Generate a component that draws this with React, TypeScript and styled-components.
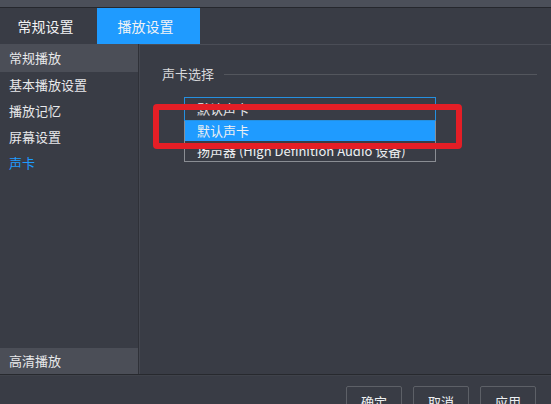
import React from "react";
import styled, { createGlobalStyle } from "styled-components";

const Global = createGlobalStyle`
  html, body { margin: 0; padding: 0; background: #393c45; }
  body { font-family: "Noto Sans CJK SC", "Noto Sans", sans-serif; }
`;

const Window = styled.div`
  position: relative;
  width: 551px;
  height: 404px;
  overflow: hidden;
  background: #393c45;
  color: #e8e9eb;
  display: flex;
  flex-direction: column;
  font-size: 13px;
`;

const TopStrip = styled.div`
  height: 7px;
  background: #4b4f59;
  border-bottom: 1px solid #25272d;
  flex: none;
`;

const TabBar = styled.div`
  height: 36px;
  display: flex;
  flex: none;
  background: #393c45;
`;

const Tab = styled.div<{ $active?: boolean; $w: number }>`
  width: ${(p) => p.$w}px;
  display: flex;
  align-items: center;
  justify-content: center;
  font-size: 14px;
  line-height: 20px;
  padding-right: 6px;
  box-sizing: border-box;
  background: ${(p) => (p.$active ? "#1f9bff" : "transparent")};
  color: #f2f3f5;
`;

const Body = styled.div`
  height: 330px;
  display: flex;
  flex: none;
`;

const Sidebar = styled.div`
  width: 138px;
  border-right: 1px solid #2f3138;
  display: flex;
  flex-direction: column;
  flex: none;
`;

const SideHeader = styled.div<{ $h: number }>`
  height: ${(p) => p.$h}px;
  background: #4b4e57;
  display: flex;
  align-items: center;
  padding-left: 9px;
  line-height: 18px;
  flex: none;
`;

const SideItem = styled.div<{ $active?: boolean }>`
  height: 26px;
  display: flex;
  align-items: center;
  padding-left: 9px;
  line-height: 18px;
  color: ${(p) => (p.$active ? "#1f9bff" : "#e8e9eb")};
`;

const Spacer = styled.div`
  flex: 1;
`;

const Main = styled.div`
  flex: 1;
  border-top: 1px solid #4a4d56;
  border-left: 1px solid #444750;
  padding: 20px 14px 0 22px;
  box-sizing: border-box;
`;

const SectionTitle = styled.div`
  display: flex;
  align-items: center;
  gap: 10px;
  line-height: 18px;
  color: #d8d9dc;
`;

const Rule = styled.div`
  flex: 1;
  height: 1px;
  background: #53565d;
`;

const ComboWrap = styled.div`
  position: relative;
  margin: 14px 0 0 22px;
  width: 252px;
`;

const Combo = styled.div`
  height: 24px;
  box-sizing: border-box;
  border: 1px solid #2590e0;
  padding-left: 12px;
  line-height: 18px;
  display: flex;
  align-items: center;
`;

const DropList = styled.div`
  position: absolute;
  left: 0;
  top: 24px;
  width: 252px;
  box-sizing: border-box;
  border: 1px solid #8a8d93;
  border-top: none;
  background: #393c45;
`;

const DropItem = styled.div<{ $active?: boolean }>`
  height: 20px;
  display: flex;
  align-items: center;
  padding-left: 12px;
  line-height: 18px;
  background: ${(p) => (p.$active ? "#1f9bff" : "transparent")};
  color: #eef0f2;
  white-space: nowrap;
`;

const Footer = styled.div`
  flex: 1;
  border-top: 1px solid #27292e;
  box-shadow: inset 0 1px 0 #3f424a;
  display: flex;
  justify-content: flex-end;
  gap: 11px;
  padding: 11px 15px 0 0;
`;

const Button = styled.div`
  width: 56px;
  height: 28px;
  box-sizing: border-box;
  border: 1px solid #5d6067;
  border-radius: 2px;
  display: flex;
  align-items: center;
  justify-content: center;
  line-height: 18px;
  padding-top: 4px;
  color: #eef0f2;
`;

const Annotation = styled.div`
  position: absolute;
  left: 153px;
  top: 104px;
  width: 309px;
  height: 45px;
  box-sizing: border-box;
  border: 6px solid #e41e26;
  border-radius: 4px;
  pointer-events: none;
`;

export default function App() {
  return (
    <>
      <Global />
      <Window>
        <TopStrip />
        <TabBar>
          <Tab $w={97}>常规设置</Tab>
          <Tab $w={103} $active>
            播放设置
          </Tab>
        </TabBar>
        <Body>
          <Sidebar>
            <SideHeader $h={28}>常规播放</SideHeader>
            <SideItem>基本播放设置</SideItem>
            <SideItem>播放记忆</SideItem>
            <SideItem>屏幕设置</SideItem>
            <SideItem $active>声卡</SideItem>
            <Spacer />
            <SideHeader $h={26}>高清播放</SideHeader>
          </Sidebar>
          <Main>
            <SectionTitle>
              声卡选择
              <Rule />
            </SectionTitle>
            <ComboWrap>
              <Combo>默认声卡</Combo>
              <DropList>
                <DropItem $active>默认声卡</DropItem>
                <DropItem>扬声器 (High Definition Audio 设备)</DropItem>
              </DropList>
            </ComboWrap>
          </Main>
        </Body>
        <Footer>
          <Button>确定</Button>
          <Button>取消</Button>
          <Button>应用</Button>
        </Footer>
        <Annotation />
      </Window>
    </>
  );
}
